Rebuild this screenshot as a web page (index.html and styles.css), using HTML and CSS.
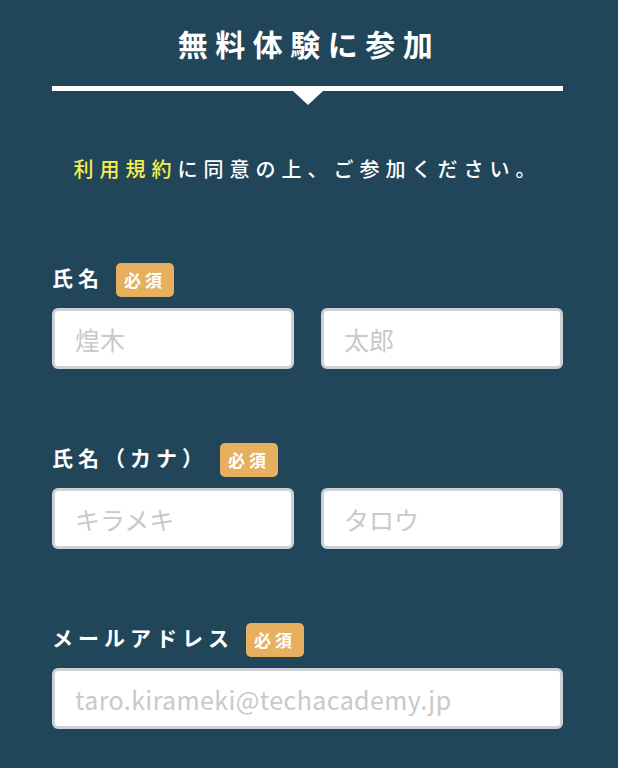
FILE: index.html
```html
<!DOCTYPE html>
<html lang="ja">
<head>
    <meta charset="UTF-8">
    <title>無料体験に参加</title>
    <link rel="stylesheet" href="styles.css">
</head>
<body>

    <div id="entry-container">
        <h1 class="entry-title">無料体験に参加</h1>
        <div class="title-rule"></div>

        <p class="entry-lead"><span class="lead-link">利用規約</span>に同意の上、ご参加ください。</p>

        <div class="form-group">
            <div class="form-label">
                <span class="label-text">氏名</span>
                <span class="required-badge">必須</span>
            </div>
            <div class="input-row">
                <input class="text-input" type="text" placeholder="煌木">
                <input class="text-input" type="text" placeholder="太郎">
            </div>
        </div>

        <div class="form-group">
            <div class="form-label">
                <span class="label-text">氏名（カナ）</span>
                <span class="required-badge">必須</span>
            </div>
            <div class="input-row">
                <input class="text-input" type="text" placeholder="キラメキ">
                <input class="text-input" type="text" placeholder="タロウ">
            </div>
        </div>

        <div class="form-group">
            <div class="form-label">
                <span class="label-text">メールアドレス</span>
                <span class="required-badge">必須</span>
            </div>
            <div class="input-row">
                <input class="text-input email-input" type="email" placeholder="taro.kirameki@techacademy.jp">
            </div>
        </div>
    </div>

</body>
</html>
```

FILE: styles.css
```css
body {
    margin: 0;
    background-color: #214659;
    font-family: "Noto Sans CJK JP", "Noto Sans", sans-serif;
    color: #ffffff;
}
#entry-container {
    width: 511px;
    padding: 23px 0 0 52px;
}
.entry-title {
    margin: 0;
    font-size: 30px;
    line-height: 40px;
    font-weight: 700;
    letter-spacing: 7.5px;
    text-align: center;
    padding-left: 3px;
}
.title-rule {
    position: relative;
    height: 5px;
    margin-top: 23px;
    background-color: #ffffff;
}
.title-rule::after {
    content: "";
    position: absolute;
    left: 241px;
    top: 5px;
    border-left: 15px solid transparent;
    border-right: 15px solid transparent;
    border-top: 14px solid #ffffff;
}
.entry-lead {
    margin: 63px 0 0 0;
    font-size: 20px;
    line-height: 30px;
    font-weight: 500;
    letter-spacing: 6px;
    text-align: center;
}
.lead-link {
    color: #f6ef4c;
}
.form-group {
    margin-top: 79px;
}
.form-group + .form-group {
    margin-top: 74px;
}
.form-label {
    display: flex;
    align-items: center;
    height: 34px;
}
.label-text {
    font-size: 21px;
    font-weight: 700;
    letter-spacing: 5px;
    line-height: 28px;
    padding-bottom: 6px;
}
.required-badge {
    margin-left: 12px;
    width: 58px;
    height: 34px;
    box-sizing: border-box;
    padding-left: 8px;
    border-radius: 5px;
    background-color: #e6b05f;
    font-size: 17px;
    font-weight: 700;
    letter-spacing: 4px;
    line-height: 34px;
}
.input-row {
    display: flex;
    gap: 27px;
    margin-top: 11px;
}
.text-input {
    flex: 1;
    min-width: 0;
    height: 61px;
    box-sizing: border-box;
    border: 3px solid #cdd1d5;
    border-radius: 6px;
    padding: 0 0 0 20px;
    background-color: #ffffff;
    font-family: "Noto Sans CJK JP", "Noto Sans", sans-serif;
    font-size: 25px;
    color: #333333;
    outline: none;
}
.email-input {
    letter-spacing: 0.4px;
}
.text-input::placeholder {
    color: #c9c9c9;
}
```
